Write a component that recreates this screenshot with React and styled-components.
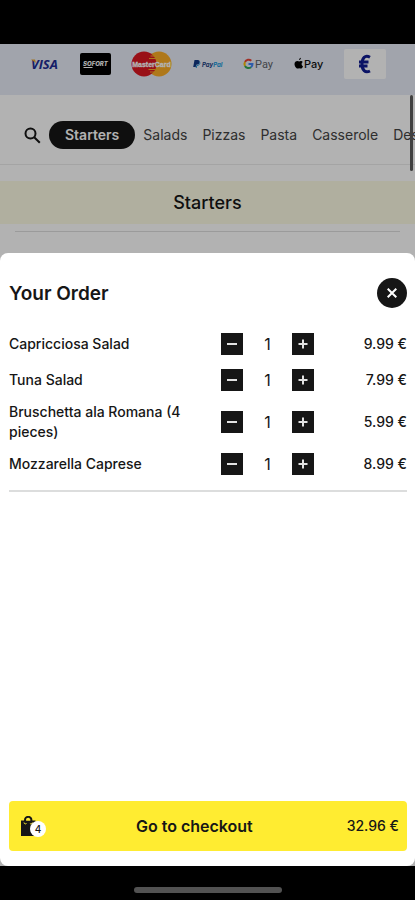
import React, { useState } from "react";
import styled, { createGlobalStyle } from "styled-components";

const GlobalStyle = createGlobalStyle`
  * { box-sizing: border-box; }
  body { margin: 0; background: #000; font-family: Inter, "Liberation Sans", sans-serif; color: #161616; }
  button { font: inherit; color: inherit; border: 0; padding: 0; cursor: pointer; }
  h1, h2, ul { margin: 0; padding: 0; }
  ul { list-style: none; }
`;

const Screen = styled.div`
  display: flex;
  flex-direction: column;
  min-height: 100vh;
`;
const StatusBar = styled.div`
  height: 44px;
  background: #000;
`;
const Stage = styled.div`
  flex: 1;
  display: grid;
  grid-template-columns: minmax(0, 1fr);
`;
const Menu = styled.main`
  grid-area: 1 / 1;
  position: relative;
  background: #fff;
`;
const HomeBar = styled.footer`
  height: 34px;
  display: flex;
  justify-content: center;
  align-items: flex-end;
  padding-bottom: 7px;
  background: #000;
`;
const HomeIndicator = styled.div`
  width: 148px;
  height: 6px;
  border-radius: 3px;
  background: #525252;
`;

const Payments = styled.ul`
  display: flex;
  justify-content: space-between;
  align-items: center;
  height: 51px;
  padding: 0 29px 11px 30px !important;
  background: #e7ebf7;
  svg { display: block; overflow: visible; }
`;
const Nav = styled.nav`
  display: flex;
  align-items: center;
  gap: 8px;
  height: 70px;
  padding: 11px 0 0 24px;
  border-bottom: 1px solid #ebebeb;
  overflow: hidden;
`;
const SearchButton = styled.button`
  flex: none;
  display: flex;
  width: 17px;
  background: none;
`;
const Tab = styled.a`
  flex: none;
  padding: 0 7px;
  font-size: 14px;
  line-height: 28px;
  color: #444;
  text-decoration: none;
`;
const ActiveTab = styled(Tab)`
  padding: 0 16px;
  border-radius: 14px;
  background: #161616;
  color: #fff;
  font-weight: 600;
`;
const Tabs = styled.div`
  display: flex;
  gap: 1px;
`;
const SectionTitle = styled.h2`
  margin-top: 16px;
  background: #fcfbe4;
  font-size: 18px;
  font-weight: 500;
  line-height: 43px;
  text-align: center;
`;
const SectionRule = styled.div`
  height: 1px;
  margin: 7px 15px 0;
  background: #dedede;
`;
const ScrollThumb = styled.div`
  position: absolute;
  top: 51px;
  right: 2px;
  width: 3px;
  height: 76px;
  border-radius: 2px;
  background: #5c5c5c;
`;

const Backdrop = styled.div`
  grid-area: 1 / 1;
  z-index: 1;
  display: flex;
  flex-direction: column;
  padding-top: 209px;
  background: rgba(0, 0, 0, 0.3);
`;
const Sheet = styled.section`
  flex: 1;
  display: flex;
  flex-direction: column;
  padding: 24px 8px 15px 9px;
  border-radius: 8px;
  background: #fff;
`;
const SheetHeader = styled.header`
  display: flex;
  align-items: center;
  justify-content: space-between;
  height: 32px;
  margin-bottom: 17px;
`;
const SheetTitle = styled.h1`
  font-size: 19px;
  font-weight: 600;
`;
const CloseButton = styled.button`
  display: grid;
  place-items: center;
  width: 30px;
  height: 30px;
  border-radius: 50%;
  background: #161616;
`;
const Items = styled.ul`
  border-bottom: 2px solid #dcdddd;
  padding-bottom: 8px !important;
`;
const Item = styled.li`
  display: grid;
  grid-template-columns: 1fr 93px 93px;
  align-items: center;
  min-height: 36px;
  padding: 4px 0;
`;
const ItemName = styled.span`
  font-size: 14px;
  font-weight: 500;
  line-height: 20px;
`;
const Price = styled(ItemName)`
  text-align: right;
`;
const Stepper = styled.div`
  display: flex;
  align-items: center;
  justify-content: space-between;
`;
const StepButton = styled.button`
  display: grid;
  place-items: center;
  width: 22px;
  height: 22px;
  background: #161616;
`;
const Quantity = styled.output`
  font-size: 16px;
  line-height: 20px;
`;
const Checkout = styled.button`
  display: flex;
  justify-content: space-between;
  align-items: center;
  height: 50px;
  margin-top: auto;
  padding: 0 8px 0 11px;
  border-radius: 4px;
  background: #ffec31;
`;
const CheckoutLabel = styled.span`
  font-size: 16px;
  font-weight: 600;
`;
const Bag = styled.span`
  position: relative;
  display: flex;
  width: 22px;
`;
const BagCount = styled.span`
  position: absolute;
  left: 10px;
  bottom: -1px;
  width: 16px;
  height: 16px;
  border-radius: 50%;
  background: #fff;
  font-size: 10px;
  font-weight: 500;
  line-height: 16px;
  text-align: center;
`;

const Visa = () => (
  <svg width="29" height="12" viewBox="0 0 29 12" role="img" aria-label="Visa">
    <text x="1" y="11" fontFamily="Open Sans, sans-serif" fontSize="13" fontWeight="700" fontStyle="italic" fill="#202c94">VISA</text>
    <path d="M1 1.5h4L6 5z" fill="#e8a832" />
  </svg>
);
const Sofort = () => (
  <svg width="31" height="22" viewBox="0 0 31 22" role="img" aria-label="Sofort">
    <rect width="31" height="22" rx="2" fill="#000" />
    <text x="15.5" y="13" textAnchor="middle" fontFamily="Inter, sans-serif" fontSize="6" fontWeight="800" fontStyle="italic" fill="#fff">SOFORT</text>
    <path d="M3.500 14.500h9" stroke="#fff" strokeWidth="1" />
  </svg>
);
const MasterCard = () => (
  <svg width="41" height="26" viewBox="0 0 41 26" role="img" aria-label="MasterCard">
    <circle cx="28" cy="13" r="12.5" fill="#fbad26" />
    <circle cx="13" cy="13" r="12.5" fill="#dc1722" />
    <path d="M19.5 5h4M18 7.500h7M17.500 18.500h7M19 21h4" fill="none" stroke="#fbad26" strokeWidth="1" />
    <text x="20.5" y="16" textAnchor="middle" fontFamily="Liberation Sans, sans-serif" fontSize="7" fontWeight="700" fill="#fff" stroke="#fff" strokeWidth=".3">MasterCard</text>
  </svg>
);
const PayPal = () => (
  <svg width="30" height="10" viewBox="0 0 30 10" role="img" aria-label="PayPal">
    <path d="M1.5 1h3.2c1.8 0 2.3 1.3 1.8 2.8C6 5.200 5 5.700 3.300 5.700L2.700 8H.2z" fill="#123984" />
    <path d="M6.700 2.800c.7 2.400-.9 3.700-3 3.700L3.200 9" fill="none" stroke="#2391d2" strokeWidth="1" />
    <text x="9" y="8" fontFamily="Inter, sans-serif" fontSize="6" fontWeight="700" fontStyle="italic" fill="#203d80">Pay<tspan fill="#1596d8">Pal</tspan></text>
  </svg>
);
const GooglePay = () => (
  <svg width="30" height="16" viewBox="0 0 30 16" role="img" aria-label="Google Pay">
    <g fill="none" strokeWidth="2">
      <path d="M8.300 4.800A4 4 0 0 0 2 6" stroke="#e94335" />
      <path d="M2 6a4 4 0 0 0 0 4" stroke="#fbbc05" />
      <path d="M2 10a4 4 0 0 0 6 1.200" stroke="#34a853" />
      <path d="M8 11.200A4 4 0 0 0 9.500 8H5.500" stroke="#4285f4" />
    </g>
    <text x="12" y="12" fontFamily="Roboto, sans-serif" fontSize="11" fill="#5f6368">Pay</text>
  </svg>
);
const ApplePay = () => (
  <svg width="30" height="16" viewBox="0 0 30 16" role="img" aria-label="Apple Pay">
    <path d="M5.200 4.100c-.2-1.200.7-2.200 1.700-2.400.1 1.200-.7 2.300-1.700 2.400zM3.500 5.100c.8 0 1.100.3 1.700.3s1-.4 1.900-.3c.7 0 1.300.4 1.600.9-1.700 1.100-1.300 3.500.3 4.200-.5 1.400-1.300 2.400-2.100 2.400-.7 0-1-.4-1.700-.4s-1 .4-1.700.4C2 12.600.5 10.100.5 8.100c0-2 1.400-3 3-3z" fill="#000" />
    <text x="10" y="12" fontFamily="Inter, sans-serif" fontSize="11" fontWeight="500" fill="#111">Pay</text>
  </svg>
);
const Euro = () => (
  <svg width="42" height="30" viewBox="0 0 42 30" role="img" aria-label="Cash">
    <rect width="42" height="30" rx="2" fill="#fff" />
    <path d="M26 8.200C21 5.500 18 9 18 15s3 9.500 8 7M15 13h9.500M15 17h8.500" fill="none" stroke="#101c91" strokeWidth="3" />
  </svg>
);
const SearchIcon = () => (
  <svg width="17" height="17" viewBox="0 0 17 17" fill="none" stroke="#161616" strokeWidth="2" aria-hidden="true">
    <circle cx="6.500" cy="6.500" r="5" />
    <path d="M10.200 10.200l5.600 5.600" />
  </svg>
);
const BagIcon = () => (
  <svg width="17" height="20" viewBox="0 0 17 20" aria-hidden="true">
    <path d="M1 4.500h14.500V20H1z" fill="#161616" />
    <path d="M5 6V4a3.200 3.200 0 0 1 6.400 0v2" fill="none" stroke="#161616" strokeWidth="2" />
    <path d="M6.200 4.500a2 1.800 0 0 1 4 0z" fill="#ffec31" />
    <path d="M4 6.500a1.500 1.500 0 0 0 2.500 1M12.400 6.500a1.500 1.500 0 0 1-2.500 1" fill="none" stroke="#ffec31" strokeWidth="1" />
  </svg>
);
const StepIcon = ({ plus }) => (
  <svg width="10" height="10" viewBox="0 0 10 10" stroke="#e2e2e2" strokeWidth="2" aria-hidden="true">
    <path d={plus ? "M.5 5h9M5 .5v9" : "M0 5h10"} />
  </svg>
);

const tabs = ["Salads", "Pizzas", "Pasta", "Casserole", "Desserts"];
const initialItems = [
  { name: "Capricciosa Salad", price: 9.99, count: 1 },
  { name: "Tuna Salad", price: 7.99, count: 1 },
  { name: "Bruschetta ala Romana (4 pieces)", price: 5.99, count: 1 },
  { name: "Mozzarella Caprese", price: 8.99, count: 1 },
];
const payments = [Visa, Sofort, MasterCard, PayPal, GooglePay, ApplePay, Euro];

export default function App() {
  const [items, setItems] = useState(initialItems);
  const change = (name, step) =>
    setItems((list) =>
      list.map((item) => (item.name === name ? { ...item, count: Math.max(0, item.count + step) } : item))
    );
  const total = items.reduce((sum, item) => sum + item.price * item.count, 0);
  const count = items.reduce((sum, item) => sum + item.count, 0);

  return (
    <Screen>
      <GlobalStyle />
      <StatusBar />
      <Stage>
        <Menu>
          <Payments>
            {payments.map((Logo, i) => (
              <li key={i}><Logo /></li>
            ))}
          </Payments>
          <Nav>
            <SearchButton aria-label="Search"><SearchIcon /></SearchButton>
            <Tabs>
              <ActiveTab href="#starters">Starters</ActiveTab>
              {tabs.map((tab) => (
                <Tab key={tab} href={`#${tab.toLowerCase()}`}>{tab}</Tab>
              ))}
            </Tabs>
          </Nav>
          <SectionTitle>Starters</SectionTitle>
          <SectionRule />
          <ScrollThumb />
        </Menu>
        <Backdrop>
          <Sheet role="dialog" aria-labelledby="order-title">
            <SheetHeader>
              <SheetTitle id="order-title">Your Order</SheetTitle>
              <CloseButton aria-label="Close">
                <svg width="10" height="10" viewBox="0 0 10 10" stroke="#fff" strokeWidth="2" aria-hidden="true">
                  <path d="M.7.7l8.600 8.600M9.300.7L.7 9.300" />
                </svg>
              </CloseButton>
            </SheetHeader>
            <Items>
              {items.map((item) => (
                <Item key={item.name}>
                  <ItemName>{item.name}</ItemName>
                  <Stepper>
                    <StepButton aria-label={`Remove one ${item.name}`} onClick={() => change(item.name, -1)}>
                      <StepIcon />
                    </StepButton>
                    <Quantity>{item.count}</Quantity>
                    <StepButton aria-label={`Add one ${item.name}`} onClick={() => change(item.name, 1)}>
                      <StepIcon plus />
                    </StepButton>
                  </Stepper>
                  <Price>{item.price.toFixed(2)} €</Price>
                </Item>
              ))}
            </Items>
            <Checkout>
              <Bag>
                <BagIcon />
                <BagCount>{count}</BagCount>
              </Bag>
              <CheckoutLabel>Go to checkout</CheckoutLabel>
              <Price>{total.toFixed(2)} €</Price>
            </Checkout>
          </Sheet>
        </Backdrop>
      </Stage>
      <HomeBar>
        <HomeIndicator />
      </HomeBar>
    </Screen>
  );
}
